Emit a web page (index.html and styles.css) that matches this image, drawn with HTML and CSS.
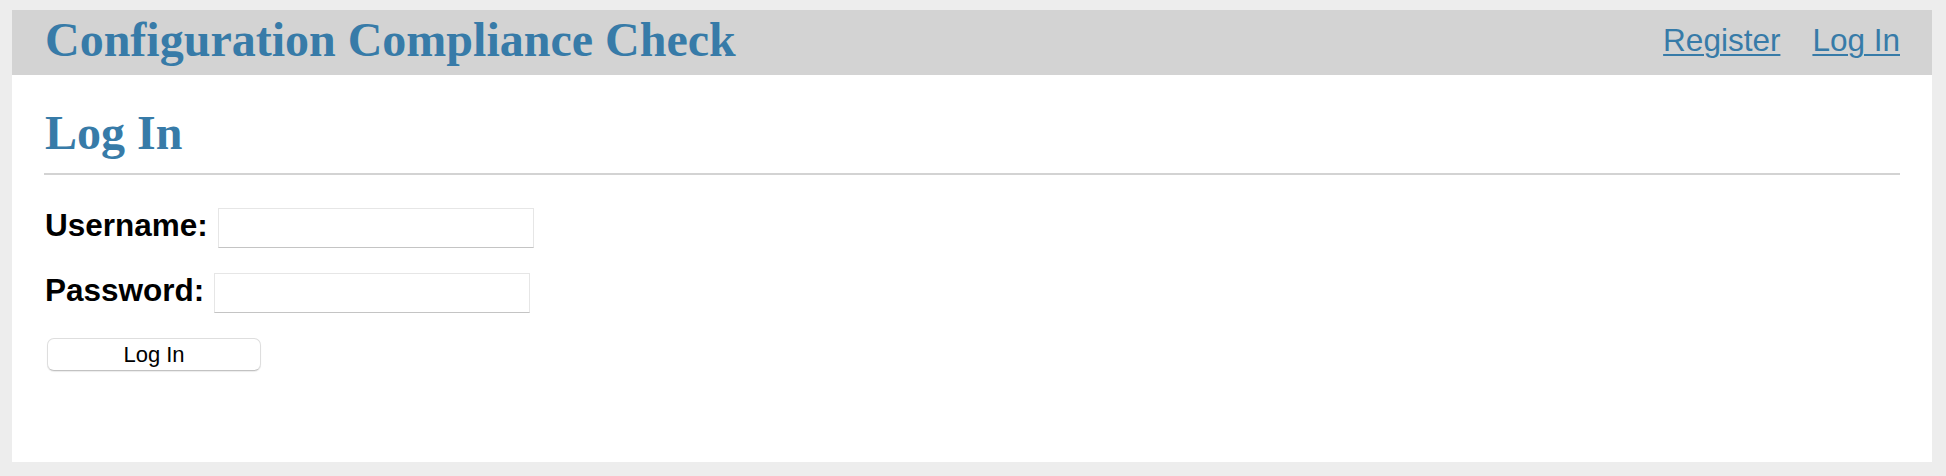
FILE: index.html
```html
<!DOCTYPE html>
<html lang="en">
<head>
<meta charset="utf-8">
<title>Log In - Configuration Compliance Check</title>
<link rel="stylesheet" href="styles.css">
</head>
<body>
<div class="page">
  <nav class="topnav">
    <h1 class="brand"><a href="#">Configuration Compliance Check</a></h1>
    <ul class="navlinks">
      <li><a href="#">Register</a></li>
      <li><a href="#">Log In</a></li>
    </ul>
  </nav>
  <section class="content">
    <header class="content-header">
      <h1 class="page-title">Log In</h1>
    </header>
    <form class="login-form" method="post">
      <div class="field">
        <label class="field-label" for="username">Username:</label>
        <input class="text-input" type="text" id="username" name="username">
      </div>
      <div class="field">
        <label class="field-label" for="password">Password:</label>
        <input class="text-input" type="password" id="password" name="password">
      </div>
      <button class="submit-btn" type="submit">Log In</button>
    </form>
  </section>
</div>
</body>
</html>
```
FILE: styles.css
```css
html {
  background: #ededed;
  font-family: "Liberation Sans", Arial, Helvetica, sans-serif;
}

body {
  margin: 10px 14px 14px 12px;
}

.page {
  background: #ffffff;
  min-height: 452px;
  box-sizing: border-box;
}

.topnav {
  display: flex;
  align-items: center;
  height: 65px;
  box-sizing: border-box;
  padding: 0 16px 6px 16px;
  background: #d3d3d3;
}

.brand {
  flex: auto;
  margin: 0;
  font-family: "Liberation Serif", "Times New Roman", serif;
  font-weight: bold;
  font-size: 48px;
  line-height: 48px;
}

.brand a {
  color: #377ba8;
  text-decoration: none;
  padding: 0 16px 0 17px;
}

.navlinks {
  display: flex;
  list-style: none;
  margin: 0;
  padding: 0;
}

.navlinks a {
  display: block;
  padding: 0 16px;
  font-size: 31.5px;
  line-height: 32px;
  color: #377ba8;
  text-decoration: underline;
  text-decoration-thickness: 2px;
  text-underline-offset: 3px;
}

.content {
  padding: 0 32px 32px 32px;
}

.content-header {
  display: flex;
  align-items: flex-end;
  border-bottom: 2px solid #d3d3d3;
}

.page-title {
  flex: auto;
  margin: 31px 0 14px 1px;
  font-family: "Liberation Serif", "Times New Roman", serif;
  font-weight: bold;
  font-size: 48px;
  line-height: 53px;
  color: #377ba8;
}

.login-form {
  display: flex;
  flex-direction: column;
  align-items: flex-start;
  margin: 33px 0 0 0;
}

.field {
  display: flex;
  align-items: flex-start;
  gap: 10px;
  margin-bottom: 25px;
}

.field-label {
  font-weight: bold;
  font-size: 31.5px;
  line-height: 35px;
  color: #000;
  margin-left: 1px;
}

.text-input {
  width: 316px;
  height: 40px;
  box-sizing: border-box;
  margin: 0;
  padding: 2px 6px;
  border: 1px solid #e6e6e6;
  border-bottom-color: #c4c4c4;
  background: #fff;
  font-size: 22px;
  font-family: inherit;
}

.submit-btn {
  width: 214px;
  height: 33px;
  margin: 0 0 0 3px;
  padding: 0;
  border: 1px solid #dedede;
  border-bottom-color: #c2c2c2;
  border-radius: 7px;
  background: #ffffff;
  box-shadow: 0 1px 1px rgba(0, 0, 0, 0.08);
  font-family: "Liberation Sans", Arial, Helvetica, sans-serif;
  font-size: 22px;
  color: #000;
}
```
